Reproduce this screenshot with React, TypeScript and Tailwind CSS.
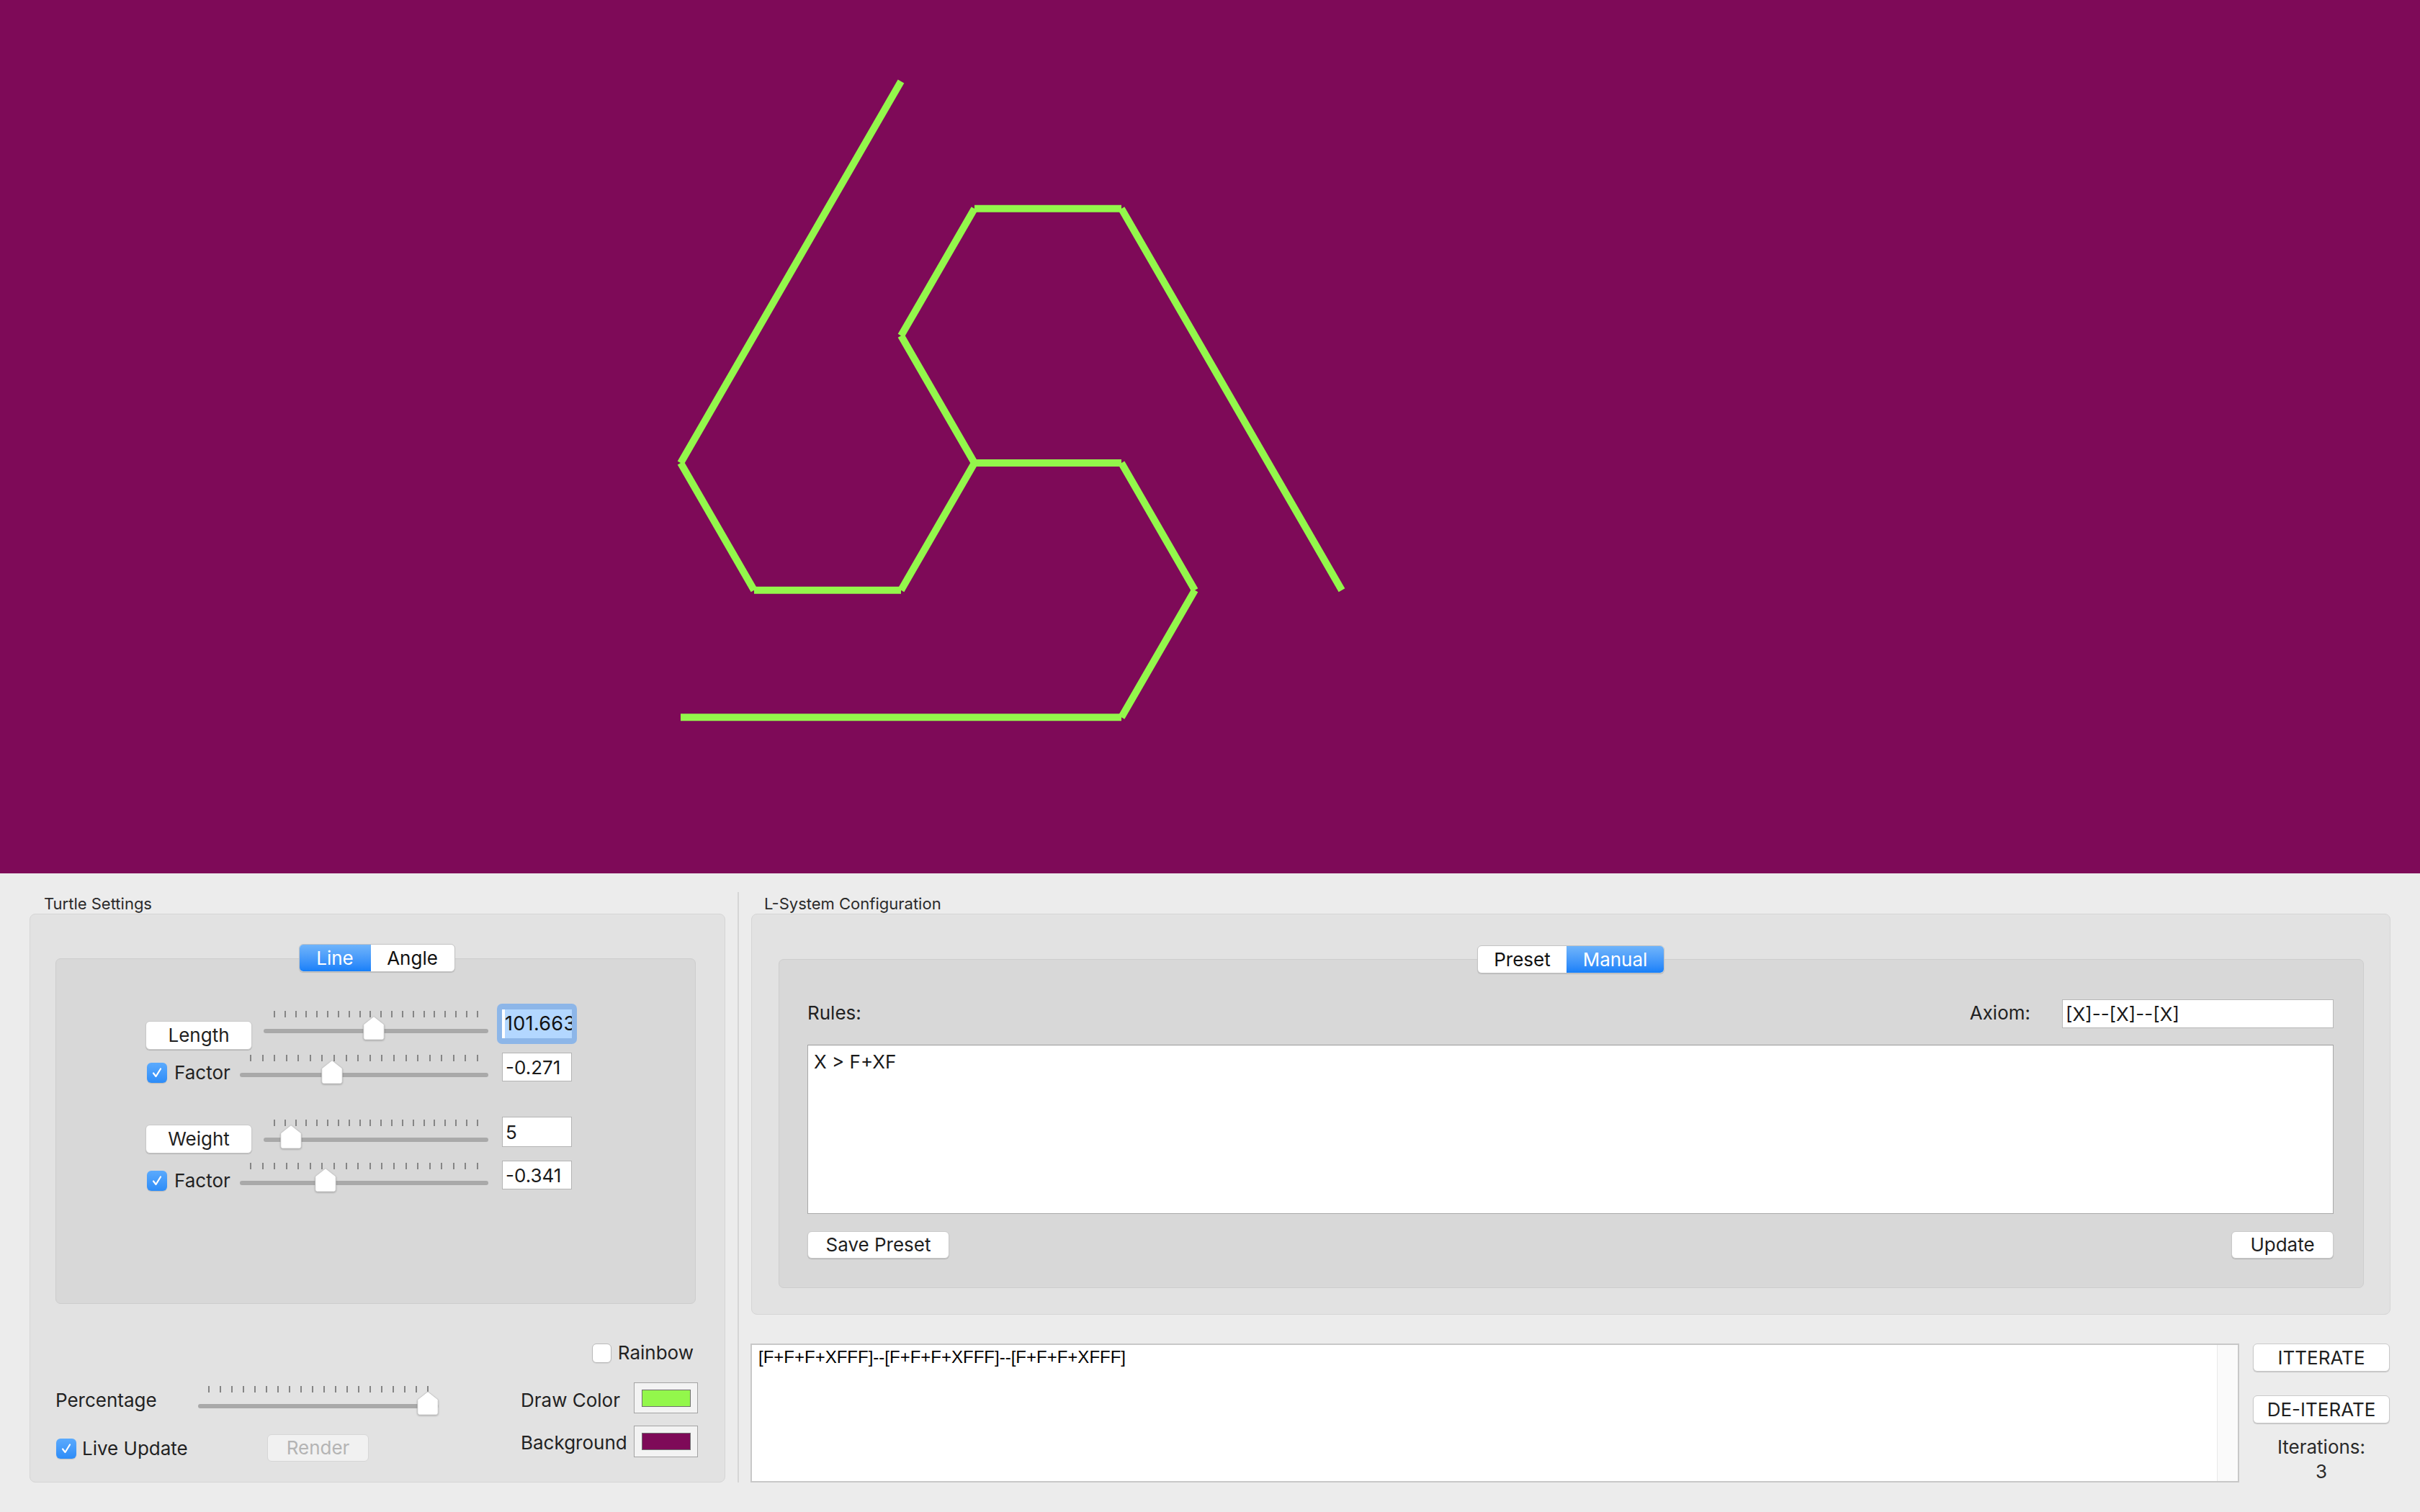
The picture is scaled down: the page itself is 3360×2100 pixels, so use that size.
import React from 'react';

type Pt = [number, number];

// turtle output for [F+F+F+XFFF]--[F+F+F+XFFF]--[F+F+F+XFFF]
const SEGMENTS: [Pt, Pt][] = [
  [[1353, 643], [1251, 819.7]],
  [[1251, 819.7], [1047, 819.7]],
  [[1047, 819.7], [945, 643]],
  [[945, 643], [1251, 113]],
  [[1353, 643], [1251, 466.3]],
  [[1251, 466.3], [1353, 289.7]],
  [[1353, 289.7], [1557, 289.7]],
  [[1557, 289.7], [1863, 819.7]],
  [[1353, 643], [1557, 643]],
  [[1557, 643], [1659, 819.7]],
  [[1659, 819.7], [1557, 996.3]],
  [[1557, 996.3], [945, 996.3]],
];

const Check = () => (
  <svg width="16" height="16" viewBox="0 0 16 16" fill="none">
    <path d="M3 8.5 L6.5 13 L13 2.5" stroke="white" strokeWidth={2.2} strokeLinecap="round" strokeLinejoin="round" />
  </svg>
);

const Checkbox = ({ checked }: { checked: boolean }) =>
  checked ? (
    <div className="flex h-[28px] w-[28px] items-center justify-center rounded-[6px] bg-linear-to-b from-[#5aaafd] to-[#2c8cf8] shadow-[0_1px_1px_rgba(0,0,0,0.15)]">
      <Check />
    </div>
  ) : (
    <div className="h-[27px] w-[27px] rounded-[6px] border border-[#b9b9b9] bg-white shadow-[0_1px_1px_rgba(0,0,0,0.08)]" />
  );

const PushButton = ({ label, className = '', disabled = false }: { label: string; className?: string; disabled?: boolean }) => (
  <div
    className={`flex items-center justify-center rounded-[6px] border text-[26px] leading-none ${
      disabled
        ? 'border-[#d6d6d6] bg-[#f1f1f1] text-[#b4b4b4]'
        : 'border-[#cacaca] bg-white text-[#1f1f1f] shadow-[0_1px_1px_rgba(0,0,0,0.18)]'
    } ${className}`}
  >
    {label}
  </div>
);

const Field = ({ value, className = '' }: { value: string; className?: string }) => (
  <div className={`flex items-center overflow-hidden whitespace-nowrap border border-[#b4b4b4] bg-white pl-[4px] text-[26px] text-[#1a1a1a] ${className}`}>
    {value}
  </div>
);

const Slider = ({ className, value }: { className: string; value: number }) => {
  const ticks = Array.from({ length: 20 });
  return (
    <div className={`relative h-[40px] ${className}`}>
      <div className="absolute left-[14px] right-[14px] top-0 flex justify-between">
        {ticks.map((_, i) => (
          <div key={i} className="h-[9px] w-[2px] bg-[#858585]" />
        ))}
      </div>
      <div className="absolute left-0 right-0 top-[25px] h-[6px] rounded-full bg-[#a9a9a9]" />
      <svg
        className="absolute top-[7px] drop-shadow-[0_1px_1px_rgba(0,0,0,0.25)]"
        style={{ left: `calc((100% - 30px) * ${value})` }}
        width="30"
        height="34"
        viewBox="0 0 30 34"
      >
        <path d="M15 0.8 L29.2 12 L29.2 30 Q29.2 33 26.5 33 L3.5 33 Q0.8 33 0.8 30 L0.8 12 Z" fill="white" stroke="#c4c4c4" strokeWidth={0.8} />
      </svg>
    </div>
  );
};

const Segmented = ({ items, active, widths }: { items: string[]; active: number; widths: string[] }) => (
  <div className="flex h-[39px] overflow-hidden rounded-[6px] border border-[#c3c3c3] bg-white shadow-[0_1px_1px_rgba(0,0,0,0.15)]">
    {items.map((it, i) => (
      <div
        key={it}
        className={`flex items-center justify-center text-[26px] leading-none ${widths[i]} ${
          i === active ? 'bg-linear-to-b from-[#6fb4fa] to-[#1580f9] text-white' : 'text-[#111]'
        }`}
      >
        {it}
      </div>
    ))}
  </div>
);

const ColorWell = ({ color, className = '' }: { color: string; className?: string }) => (
  <div className={`flex w-[89px] items-center justify-center border border-[#a3a3a3] bg-[#f3f3f3] ${className}`}>
    <div className="h-[24px] w-[68px] border border-[#6f6f6f]" style={{ backgroundColor: color }} />
  </div>
);

const FactorLabel = () => (
  <div className="mt-[14px] flex w-[129px] items-center gap-[10px]">
    <Checkbox checked />
    <span className="text-[26px] leading-[28px] text-[#222]">Factor</span>
  </div>
);

export default function App() {
  return (
    <div className="flex h-[2100px] w-[3360px] flex-col overflow-hidden bg-[#ececec] font-['Inter',sans-serif] text-[#222]">
      {/* canvas */}
      <div className="h-[1213px] w-full bg-[#7e0a58]">
        <svg width="3360" height="1213" viewBox="0 0 3360 1213">
          {SEGMENTS.map(([a, b], i) => (
            <line key={i} x1={a[0]} y1={a[1]} x2={b[0]} y2={b[1]} stroke="#93f74b" strokeWidth={10} strokeLinecap="butt" />
          ))}
        </svg>
      </div>

      <div className="flex flex-1">
        {/* Turtle Settings */}
        <div className="flex w-[1024px] flex-col pl-[41px]">
          <div className="mt-[29px] h-[27px] pl-[20px] text-[22px] leading-[27px] text-[#2b2b2b]">Turtle Settings</div>
          <div className="flex h-[790px] w-[966px] flex-col rounded-[8px] border border-[#d5d5d5] bg-[#e2e2e2] pt-[41px]">
            <div className="relative z-10 flex justify-center pr-[2px]">
              <Segmented items={['Line', 'Angle']} active={0} widths={['w-[99px]', 'w-[116px]']} />
            </div>
            <div className="-mt-[19px] ml-[35px] h-[480px] w-[889px] rounded-[7px] border border-[#cdcdcd] bg-[#d8d8d8] pt-[62px]">
              {/* Length */}
              <div className="flex h-[64px] items-start">
                <PushButton label="Length" className="ml-[124px] mt-[24px] h-[40px] w-[148px]" />
                <Slider className="ml-[16px] mt-[10px] w-[312px]" value={0.49} />
                <div className="ml-[12px] h-[56px] w-[111px] rounded-[7px] bg-[#8db6e8] px-[7px] py-[8px]">
                  <div className="flex h-[40px] items-center overflow-hidden whitespace-nowrap bg-white pl-[4px] text-[27px] tracking-[0.3px] text-[#111]">
                    <span className="bg-[#b3d7ff] pr-[10px]">101.663</span>
                  </div>
                </div>
              </div>
              {/* Factor */}
              <div className="mt-[4px] flex h-[43px] items-start">
                <div className="ml-[126px]">
                  <FactorLabel />
                </div>
                <Slider className="mt-[3px] w-[345px]" value={0.36} />
                <Field value="-0.271" className="ml-[19px] h-[40px] w-[97px]" />
              </div>
              {/* Weight */}
              <div className="mt-[46px] flex h-[51px] items-start">
                <PushButton label="Weight" className="ml-[124px] mt-[11px] h-[40px] w-[148px]" />
                <Slider className="ml-[16px] mt-[4px] w-[312px]" value={0.08} />
                <Field value="5" className="ml-[19px] h-[42px] w-[97px]" />
              </div>
              {/* Factor */}
              <div className="mt-[10px] flex h-[42px] items-start">
                <div className="ml-[126px]">
                  <FactorLabel />
                </div>
                <Slider className="mt-[3px] w-[345px]" value={0.33} />
                <Field value="-0.341" className="ml-[19px] h-[40px] w-[97px]" />
              </div>
            </div>

            <div className="mt-[54px] flex h-[28px] items-center justify-end gap-[9px] pr-[43px]">
              <Checkbox checked={false} />
              <span className="text-[26px] leading-[28px]">Rainbow</span>
            </div>

            <div className="mt-[27px] flex h-[43px] items-start pl-[35px]">
              <div className="mt-[10px] w-[198px] text-[26px] leading-[30px]">Percentage</div>
              <Slider className="mt-[5px] w-[334px]" value={1} />
              <div className="ml-[114px] mt-[10px] w-[157px] text-[26px] leading-[30px]">Draw Color</div>
              <ColorWell color="#93f74b" className="h-[43px]" />
            </div>

            <div className="mt-[17px] flex h-[50px] items-start pl-[36px]">
              <div className="mt-[18px] flex w-[293px] items-center gap-[8px]">
                <Checkbox checked />
                <span className="text-[26px] leading-[28px]">Live Update</span>
              </div>
              <PushButton label="Render" disabled className="mt-[12px] h-[38px] w-[141px]" />
              <div className="ml-[211px] mt-[9px] w-[157px] text-[26px] leading-[30px]">Background</div>
              <ColorWell color="#7e0a58" className="h-[44px]" />
            </div>
          </div>
        </div>

        <div className="mt-[26px] h-[820px] w-[2px] bg-[#d6d6d6]" />

        {/* L-System Configuration */}
        <div className="flex flex-1 flex-col pl-[17px]">
          <div className="mt-[29px] h-[27px] pl-[18px] text-[22px] leading-[27px] text-[#2b2b2b]">L-System Configuration</div>
          <div className="flex h-[557px] w-[2276px] flex-col rounded-[8px] border border-[#d5d5d5] bg-[#e2e2e2] pt-[43px]">
            <div className="relative z-10 flex justify-center">
              <Segmented items={['Preset', 'Manual']} active={1} widths={['w-[123px]', 'w-[135px]']} />
            </div>
            <div className="-mt-[20px] ml-[37px] flex h-[457px] w-[2201px] flex-col rounded-[7px] border border-[#cdcdcd] bg-[#d8d8d8] pl-[39px] pr-[41px] pt-[55px]">
              <div className="flex h-[36px] items-center">
                <span className="text-[26px]">Rules:</span>
                <span className="ml-auto text-[26px]">Axiom:</span>
                <Field value="[X]--[X]--[X]" className="ml-[44px] mt-[4px] h-[40px] w-[377px] border-[#b8b8b8]" />
              </div>
              <div className="mt-[27px] h-[235px] w-full border border-[#a9a9a9] border-t-[#9a9a9a] bg-white px-[8px] pt-[6px] text-[26px] leading-[34px] text-[#1a1a1a]">
                X &gt; F+XF
              </div>
              <div className="mt-[24px] flex justify-between">
                <PushButton label="Save Preset" className="h-[38px] w-[197px]" />
                <PushButton label="Update" className="h-[38px] w-[142px]" />
              </div>
            </div>
          </div>

          <div className="mt-[40px] flex">
            <div className="-ml-[1px] flex h-[193px] w-[2067px] border-2 border-[#c8c8c8] bg-white">
              <div className="flex-1 pl-[9px] pt-[3px] font-['Liberation_Sans',Arial,sans-serif] text-[24px] leading-[28px] text-black">
                [F+F+F+XFFF]--[F+F+F+XFFF]--[F+F+F+XFFF]
              </div>
              <div className="w-[29px] border-l border-[#e8e8e8] bg-[#fafafa]" />
            </div>
            <div className="ml-[19px] flex w-[190px] flex-col items-center">
              <PushButton label="ITTERATE" className="h-[39px] w-[190px]" />
              <PushButton label="DE-ITERATE" className="mt-[33px] h-[39px] w-[190px]" />
              <div className="mt-[16px] text-center text-[26px] leading-[34px] text-[#2a2a2a]">
                Iterations:
                <br />3
              </div>
            </div>
          </div>
        </div>
      </div>
    </div>
  );
}
